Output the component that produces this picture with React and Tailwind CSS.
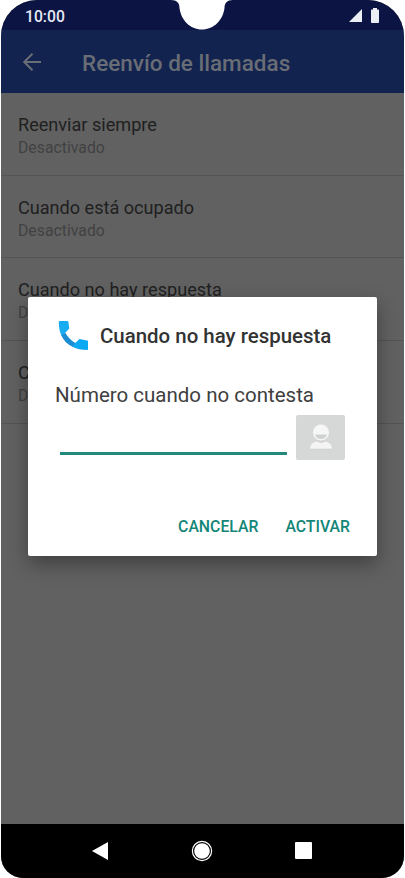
const options = [
    { title: 'Reenviar siempre', status: 'Desactivado' },
    { title: 'Cuando está ocupado', status: 'Desactivado' },
    { title: 'Cuando no hay respuesta', status: 'Desactivado' },
    { title: 'Cuando no disponible', status: 'Desactivado' },
];

const StatusBar = () => (
    <div className="relative h-[30px] shrink-0 bg-[#0b1442] flex items-center justify-between pl-6 pr-[25px]">
        <span className="text-[15.700px] leading-none font-medium text-[#e6e8f4] pt-[4px]">10:00</span>
        <div className="flex items-center gap-[9px] pt-[1px]">
            <svg width="13" height="13" viewBox="0 0 13 13" fill="#eceef6">
                <path d="M13 0v13H0z" />
            </svg>
            <svg width="8" height="15" viewBox="0 0 8 15" fill="#eceef6">
                <path d="M2 0h4v1.500h1.200q.8 0 .8.8v11.900q0 .8-.8.8H.8q-.8 0-.8-.8V2.300q0-.8.8-.8H2z" />
            </svg>
        </div>

        {/* Camera notch */}
        <svg className="absolute left-[170px] top-0" width="62" height="30" viewBox="0 0 62 30" fill="#fff">
            <path d="M0 0C6 0 8.500 3 8.500 8C10 20 19 29.500 31 29.500S52 20 53.500 8C53.500 3 56 0 62 0z" />
        </svg>
    </div>
);

const AppBar = () => (
    <div className="h-[63px] shrink-0 bg-[#11234e] flex items-center pl-[21px]">
        <svg width="20" height="20" viewBox="0 0 20 20" fill="none" stroke="#696d75" strokeWidth="2">
            <path d="M19 10H2.500M10.500 1.700L2.200 10l8.300 8.300" />
        </svg>
        <h1 className="ml-10 pt-[3px] text-[22.500px] leading-none font-medium text-[#696d75]">Reenvío de llamadas</h1>
    </div>
);

const OptionRow = ({ title, status }) => (
    <div className="h-[82.700px] shrink-0 border-b-[1.500px] border-[#545454] pl-[17px] pt-[20px]">
        <p className="text-[18.100px] leading-[24px] text-[#202020]">{title}</p>
        <p className="text-[15.800px] leading-[21px] text-[#414141]">{status}</p>
    </div>
);

const ForwardDialog = () => (
    <div className="absolute left-[27px] top-[297px] w-[349px] h-[259px] rounded-[2px] bg-white shadow-[0_8px_20px_rgba(0,0,0,0.35)]">
        <div className="flex items-center pl-[30px] pt-[24px]">
            <svg width="30" height="30" viewBox="0 0 30 30">
                <path
                    d="M1.600 0H9.500Q10.200 0 10.300 .7L11.300 7.500L7.300 11.700L3.600 15C1.700 11 .8 6 .8 .7Q.9 0 1.600 0z"
                    fill="#18adf3"
                />
                <path
                    d="M30 28.300V20.500Q30 19.700 29.200 19.500L21.500 18L17.200 22L14 25.500C19 28.200 23.500 29 29.200 29Q30 29 30 28.300z"
                    fill="#0da8f2"
                />
                <path d="M3.300 14.400L7.300 11.700C9.700 16 13 19.500 17.400 21.900L14.500 25.800C9.500 23.200 5.700 19.500 3.300 14.400z" fill="#1b8dd2" />
            </svg>
            <h2 className="ml-3 text-[20.450px] leading-[30px] font-medium text-[#333]">Cuando no hay respuesta</h2>
        </div>

        <p className="mt-[32px] pl-[27px] text-[20.500px] leading-[24px] text-[#404040]">Número cuando no contesta</p>

        <div className="flex pl-[32px] mt-[11px]">
            <div className="w-[227px] h-[37px] border-b-[3px] border-[#23897c]" />
            {/* Pick from contacts */}
            <div className="ml-[9px] -mt-[3px] w-[49px] h-[45px] rounded-[2px] bg-[#d6d8d7] flex items-start justify-center pt-[7px]">
                <svg width="26" height="28" viewBox="0 0 26 28">
                    <path d="M1.300 27c.8-4.600 3.500-7.400 7.200-7.700q4.500 2.500 9 0c3.700.3 6.400 3.100 7.200 7.700z" fill="#f4f4f4" stroke="#c8caca" strokeWidth="0.5" />
                    <circle cx="13" cy="10.500" r="8.400" fill="#f6f6f6" stroke="#c8caca" strokeWidth="0.5" />
                    <path d="M7 12.500h12c-.8 3.100-3 4.500-6 4.500s-5.200-1.400-6-4.500z" fill="#d0d2d1" />
                </svg>
            </div>
        </div>

        <div className="flex justify-end gap-[27px] pr-[27px] mt-[57px] text-[15.800px] leading-[20px] font-medium text-[#138677]">
            <button>CANCELAR</button>
            <button>ACTIVAR</button>
        </div>
    </div>
);

const NavBar = () => (
    <div className="h-[54px] shrink-0 bg-black flex items-center justify-between pl-[91px] pr-[92px]">
        <svg width="16" height="18" viewBox="0 0 16 18" fill="#fff">
            <path d="M16 0v18L0 9z" />
        </svg>
        <svg width="22" height="22" viewBox="0 0 22 22">
            <circle cx="11" cy="11" r="9.600" fill="none" stroke="#fff" strokeWidth="1.200" />
            <circle cx="11" cy="11" r="7.800" fill="#fff" />
        </svg>
        <div className="w-[17px] h-[17px] mb-[1px] rounded-[1px] bg-white" />
    </div>
);

export default function App() {
    return (
        <div className="w-[405px] h-[878px] bg-white px-px font-['Roboto',sans-serif]">
            <div className="relative h-full overflow-hidden flex flex-col bg-[#616161] rounded-t-[36px] rounded-b-[22px]">
                <StatusBar />
                <AppBar />
                <div className="flex-1 flex flex-col">
                    {options.map((option) => (
                        <OptionRow key={option.title} {...option} />
                    ))}
                </div>
                <NavBar />
                <ForwardDialog />
            </div>
        </div>
    );
}
